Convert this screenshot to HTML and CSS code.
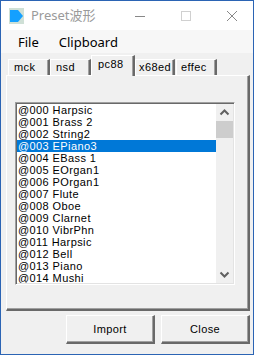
FILE: index.html
```html
<!DOCTYPE html>
<html>
<head>
<meta charset="utf-8">
<link rel="stylesheet" href="styles.css">
</head>
<body>
<div class="window">
  <div class="titlebar">
    <svg class="appicon" width="15" height="16" viewBox="0 0 15 16">
      <rect x="0" y="0" width="15" height="16" fill="#cfe0d6"/>
      <path d="M1 2 H9 L14 8 L9 14 H1 Z" fill="#14a0ff"/>
    </svg>
    <span class="title">Preset波形</span>
    <div class="controls">
      <svg class="ctl" width="46" height="29" viewBox="0 0 46 29"><path d="M18 15.5 H28" stroke="#888" stroke-width="1"/></svg>
      <svg class="ctl" width="46" height="29" viewBox="0 0 46 29"><rect x="18.5" y="10.5" width="9" height="9" fill="none" stroke="#d0d0d0"/></svg>
      <svg class="ctl" width="46" height="29" viewBox="0 0 46 29"><path d="M18 10 L28 20 M28 10 L18 20" stroke="#888" stroke-width="1"/></svg>
    </div>
  </div>
  <div class="menubar">
    <span class="menuitem">File</span>
    <span class="menuitem">Clipboard</span>
  </div>
  <div class="client">
    <div class="tabs">
      <div class="tab t1">mck</div>
      <div class="tab t2">nsd</div>
      <div class="tab sel">pc88</div>
      <div class="tab t4">x68ed</div>
      <div class="tab t5">effec</div>
    </div>
    <div class="panel">
      <div class="listbox">
        <div class="items">
          <div class="item">@000 Harpsic</div>
          <div class="item">@001 Brass 2</div>
          <div class="item">@002 String2</div>
          <div class="item selected">@003 EPiano3</div>
          <div class="item">@004 EBass 1</div>
          <div class="item">@005 EOrgan1</div>
          <div class="item">@006 POrgan1</div>
          <div class="item">@007 Flute</div>
          <div class="item">@008 Oboe</div>
          <div class="item">@009 Clarnet</div>
          <div class="item">@010 VibrPhn</div>
          <div class="item">@011 Harpsic</div>
          <div class="item">@012 Bell</div>
          <div class="item">@013 Piano</div>
          <div class="item">@014 Mushi</div>
        </div>
        <div class="scrollbar">
          <svg class="arrow" width="17" height="17" viewBox="0 0 17 17"><path d="M4.5 10.5 L8.5 6.5 L12.5 10.5" fill="none" stroke="#606060" stroke-width="2"/></svg>
          <div class="track"><div class="thumb"></div></div>
          <svg class="arrow" width="17" height="17" viewBox="0 0 17 17"><path d="M4.5 6.5 L8.5 10.5 L12.5 6.5" fill="none" stroke="#606060" stroke-width="2"/></svg>
        </div>
      </div>
    </div>
    <div class="buttons">
      <div class="btn">Import</div>
      <div class="btn">Close</div>
    </div>
  </div>
</div>
</body>
</html>
```
FILE: styles.css
```css
html, body {
  margin: 0;
  padding: 0;
  background: #f0f0f0;
}
.window {
  width: 254px;
  height: 355px;
  box-sizing: border-box;
  border: 1px solid #2b64b4;
  background: #f0f0f0;
  display: flex;
  flex-direction: column;
  overflow: hidden;
}
.titlebar {
  height: 29px;
  background: #ffffff;
  display: flex;
  align-items: center;
  flex-shrink: 0;
}
.appicon {
  margin-left: 8px;
  flex-shrink: 0;
}
.title {
  margin-left: 7px;
  font-family: "Noto Sans", "Noto Sans CJK JP", sans-serif;
  font-size: 13px;
  color: #9a9a9a;
  line-height: 16px;
  margin-top: -1px;
}
.controls {
  margin-left: auto;
  display: flex;
  margin-right: -2px;
}
.ctl {
  display: block;
}
.menubar {
  height: 23px;
  background: #f7f7f7;
  display: flex;
  align-items: center;
  padding-left: 10px;
  flex-shrink: 0;
  font-family: "Noto Sans", sans-serif;
  font-size: 13px;
  color: #000;
}
.menuitem {
  padding: 0 7px;
  margin-right: 6px;
  line-height: 18px;
  margin-top: 1px;
}
.client {
  flex: 1;
  padding: 0 3px 0 5px;
  font-family: "Liberation Sans", Arial, sans-serif;
  font-size: 11px;
  letter-spacing: 0.4px;
}
.tabs {
  display: flex;
  height: 22px;
  align-items: flex-end;
  padding-left: 2px;
  position: relative;
  z-index: 1;
}
.tab {
  height: 16px;
  box-sizing: border-box;
  border-top: 1px solid #ffffff;
  border-left: 1px solid #ffffff;
  border-right: 2px solid #696969;
  box-shadow: inset -1px 0 0 #a0a0a0;
  background: #f0f0f0;
  line-height: 14px;
  padding-left: 5px;
  color: #000;
  white-space: nowrap;
  overflow: hidden;
}
.t1 { width: 42px; }
.t2 { width: 41px; }
.t4 { width: 40px; padding-left: 3px; }
.t5 { width: 41px; margin-left: 1px; padding-left: 4px; }
.tab.sel {
  width: 44px;
  height: 21px;
  margin-bottom: -1px;
  padding-left: 6px;
  line-height: 14px;
  padding-top: 1px;
}
.panel {
  height: 236px;
  box-sizing: border-box;
  border-top: 1px solid #ffffff;
  border-left: 1px solid #ffffff;
  border-right: 2px solid #696969;
  border-bottom: 2px solid #696969;
  box-shadow: inset -1px -1px 0 #a0a0a0;
  padding: 26px 0 0 8px;
}
.listbox {
  width: 220px;
  height: 183px;
  box-sizing: border-box;
  border-top: 1px solid #a0a0a0;
  border-left: 1px solid #a0a0a0;
  border-right: 1px solid #ffffff;
  border-bottom: 1px solid #ffffff;
  box-shadow: inset 1px 1px 0 #696969, inset -1px -1px 0 #e3e3e3;
  padding: 1px;
  background: #ffffff;
  display: flex;
}
.items {
  flex: 1;
  overflow: hidden;
  background: #fff;
}
.item {
  height: 12px;
  line-height: 12px;
  padding-left: 1px;
  white-space: nowrap;
  color: #000;
}
.item.selected {
  background: #0078d7;
  color: #ffffff;
}
.scrollbar {
  width: 17px;
  background: #f0f0f0;
  display: flex;
  flex-direction: column;
}
.arrow {
  display: block;
  flex-shrink: 0;
}
.track {
  flex: 1;
}
.thumb {
  height: 17px;
  background: #cdcdcd;
}
.buttons {
  display: flex;
  justify-content: flex-end;
  gap: 6px;
  margin-top: 4px;
}
.btn {
  width: 89px;
  height: 29px;
  box-sizing: border-box;
  border-top: 1px solid #ffffff;
  border-left: 1px solid #ffffff;
  border-right: 2px solid #696969;
  border-bottom: 2px solid #696969;
  box-shadow: inset -1px -1px 0 #a0a0a0;
  background: #f0f0f0;
  display: flex;
  align-items: center;
  justify-content: center;
  color: #000;
  padding-bottom: 1px;
}
```
